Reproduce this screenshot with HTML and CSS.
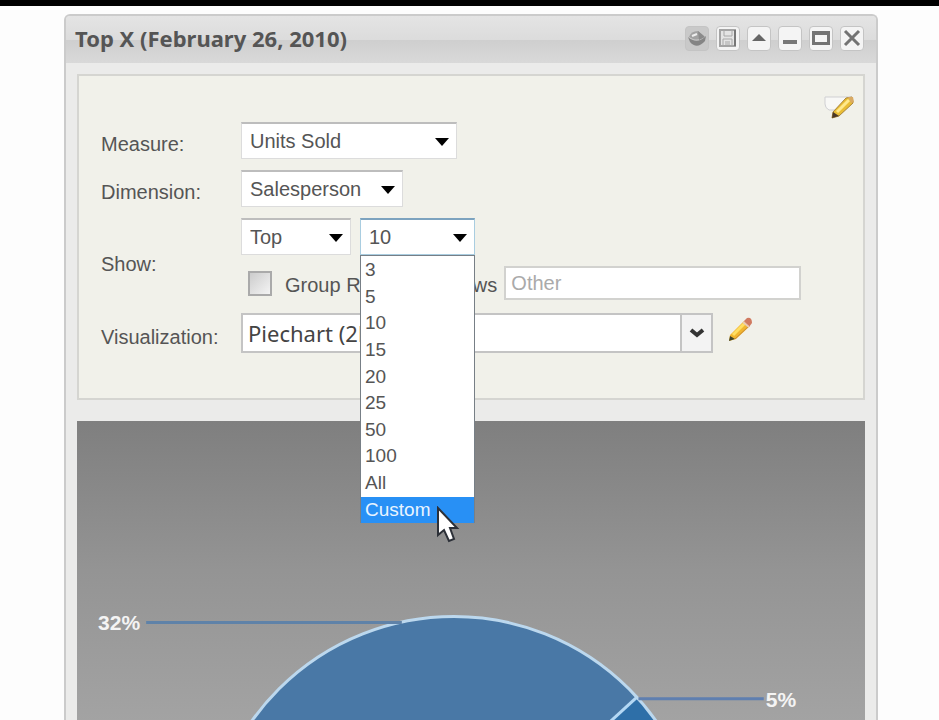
FILE: index.html
```html
<!DOCTYPE html>
<html lang="en">
<head>
    <meta charset="UTF-8">
    <meta name="viewport" content="width=device-width, initial-scale=1.0">
    <title>Top X</title>
    <link rel="stylesheet" href="styles.css">
</head>
<body>
    <main class="window">
        <header class="titlebar">
            <h1>Top X (February 26, 2010)</h1>
            <div class="tools">
                <button type="button" class="tool pressed" aria-label="Refresh">
                    <svg width="20" height="20" viewBox="0 0 20 20">
                        <path d="M2 9 Q4 3 11 3 L17 8 Q13 13 6 11 Z" fill="#a2a2a2"/>
                        <path d="M1 9 Q10 17 19 8 L18 13 Q10 22 3 14 Z" fill="#858585"/>
                        <path d="M11 3 L18 9 L12 12 Z" fill="#8b8b8b"/>
                        <path d="M5 8 L10 6" stroke="#eee" stroke-width="2"/>
                    </svg>
                </button>
                <button type="button" class="tool" aria-label="Save">
                    <svg width="20" height="20" viewBox="0 0 20 20">
                        <path d="M2 2 H17 V18 H2 Z" fill="#e4e4e4" stroke="#a4a4a4" stroke-width="2"/>
                        <path d="M6 2 V8 H14 V2 M5 18 V11 H14 V18 M7 14 H12 M7 16 H12" fill="none" stroke="#a8a8a8" stroke-width="1"/>
                        <path d="M17 2 V18" stroke="#777" stroke-width="2"/>
                    </svg>
                </button>
                <button type="button" class="tool" aria-label="Collapse">
                    <svg width="20" height="20" viewBox="0 0 20 20"><path d="M3 13 L10 6 L17 13 Z" fill="#666"/></svg>
                </button>
                <button type="button" class="tool" aria-label="Minimize">
                    <svg width="20" height="20" viewBox="0 0 20 20"><path d="M3 12 H17 V16 H3 Z" fill="#777"/></svg>
                </button>
                <button type="button" class="tool" aria-label="Maximize">
                    <svg width="20" height="20" viewBox="0 0 20 20"><path d="M1 3 H19 V17 H1 Z M4 7 V14 H16 V7 Z" fill="#737373" fill-rule="evenodd"/></svg>
                </button>
                <button type="button" class="tool" aria-label="Close">
                    <svg width="20" height="20" viewBox="0 0 20 20"><path d="M3 3 L17 17 M17 3 L3 17" stroke="#737373" stroke-width="3"/></svg>
                </button>
            </div>
        </header>

        <form class="settings">
            <button type="button" class="icon-button edit-note" aria-label="Edit settings">
                <svg width="32" height="26" viewBox="0 0 32 26">
                    <path d="M1 3 H28 L20 16 H5 Q1 14 1 10 Z" fill="#f8f8f6" stroke="#cfcfd2"/>
                    <path d="M9 18 L22 4 L28 3 L29 9 L15 22 L8 24 Z" fill="#e9bd35" stroke="#a8843a"/>
                    <path d="M13 18 L25 6" stroke="#ffe98c" stroke-width="3"/>
                    <path d="M24 3 L29 3 L30 8 L27 9 Z" fill="#d9aa63"/>
                    <path d="M9 18 L15 22 L8 24 Z" fill="#4b3828"/>
                </svg>
            </button>

            <label for="measure">Measure:</label>
            <div class="select-box measure">
                <select id="measure"><option>Units Sold</option></select>
                <svg class="arrow" width="14" height="8" viewBox="0 0 14 8"><path d="M0 0 H14 L7 8 Z"/></svg>
            </div>

            <label for="dimension">Dimension:</label>
            <div class="select-box dimension">
                <select id="dimension"><option>Salesperson</option></select>
                <svg class="arrow" width="14" height="8" viewBox="0 0 14 8"><path d="M0 0 H14 L7 8 Z"/></svg>
            </div>

            <label for="show">Show:</label>
            <div class="show">
                <div class="show-row">
                    <div class="select-box order">
                        <select id="show"><option>Top</option></select>
                        <svg class="arrow" width="14" height="8" viewBox="0 0 14 8"><path d="M0 0 H14 L7 8 Z"/></svg>
                    </div>
                    <div class="select-box count open">
                        <select id="count" aria-label="Count"><option>10</option></select>
                        <svg class="arrow" width="14" height="8" viewBox="0 0 14 8"><path d="M0 0 H14 L7 8 Z"/></svg>
                        <ul class="options" role="listbox" aria-label="Count">
                            <li role="option">3</li>
                            <li role="option">5</li>
                            <li role="option">10</li>
                            <li role="option">15</li>
                            <li role="option">20</li>
                            <li role="option">25</li>
                            <li role="option">50</li>
                            <li role="option">100</li>
                            <li role="option">All</li>
                            <li role="option" class="active" aria-selected="true">Custom</li>
                        </ul>
                        <svg class="cursor" width="24" height="38" viewBox="0 0 24 38">
                            <path d="M2 2 V29 L8 24 L13 35 L18 33 L14 22 H21 Z" fill="#fff" stroke="#2c3038" stroke-width="2"/>
                        </svg>
                    </div>
                </div>
                <div class="group-row">
                    <input type="checkbox" id="group">
                    <label for="group">Group Remaining Rows</label>
                    <input type="text" class="other" aria-label="Group name" placeholder="Other">
                </div>
            </div>

            <label for="visualization">Visualization:</label>
            <div class="visual-row">
                <div class="combo">
                    <input type="text" id="visualization" value="Piechart (2D)">
                    <button type="button" aria-label="Show visualizations">
                        <svg width="16" height="10" viewBox="0 0 16 10"><path d="M2 2 L8 7 L14 2" fill="none" stroke="#333" stroke-width="4"/></svg>
                    </button>
                </div>
                <button type="button" class="icon-button" aria-label="Edit visualization">
                    <svg width="26" height="32" viewBox="0 0 26 32">
                        <path d="M2 18 L16 4 L22 9 L8 22 L1 24 Z" fill="#f1b62f"/>
                        <path d="M5 18 L17 6" stroke="#ffdf62" stroke-width="3"/>
                        <path d="M7 22 L21 9" stroke="#c98a35" stroke-width="1"/>
                        <path d="M16 4 L19 1 Q24 0 24 6 L21 10 Z" fill="#d07a60"/>
                        <path d="M15 5 L21 10" stroke="#e8c9b5" stroke-width="2"/>
                        <path d="M2 19 L7 22 L1 24 Z" fill="#40452c"/>
                    </svg>
                </button>
            </div>
        </form>

        <section class="chart">
            <svg viewBox="0 0 786 299" preserveAspectRatio="xMidYMin slice" role="img" aria-label="Pie chart">
                <circle cx="376" cy="442" r="247" fill="#4978a6"/>
                <path d="M376 442 L558 276 A247 247 0 0 1 623 442 Z" fill="#2e6fa8"/>
                <path d="M376 442 L558 276" stroke="#b4d8f4" stroke-width="3"/>
                <circle cx="376" cy="442" r="247" fill="none" stroke="#bcd8ee" stroke-width="3"/>
                <path d="M69 201 H324" stroke="#5f82a8" stroke-width="3"/>
                <path d="M560 277 H685" stroke="#5f7fb0" stroke-width="3"/>
                <text x="21" y="208">32%</text>
                <text x="687" y="285">5%</text>
            </svg>
        </section>
    </main>
</body>
</html>
```

FILE: styles.css
```css
* {
    box-sizing: border-box;
}

body {
    margin: 0;
    min-height: 100vh;
    display: flex;
    flex-direction: column;
    padding: 8px 61px 0 64px;
    border-top: 6px solid #000;
    background: #fdfdfd;
    font-family: "Liberation Sans", Arial, sans-serif;
    font-size: 20px;
    color: #555;
}

button, input, select {
    font: inherit;
    color: inherit;
}

.window {
    flex: 1;
    display: flex;
    flex-direction: column;
    border: 2px solid #cbcbcb;
    border-bottom: 0;
    border-radius: 6px 6px 0 0;
    background: #ebebea;
}

.titlebar {
    display: flex;
    justify-content: space-between;
    align-items: center;
    height: 47px;
    padding: 0 12px 3px 9px;
    border-radius: 4px 4px 0 0;
    background: linear-gradient(#e4e4e4, #dcdcdc 50%, #cfcfcf 52%, #d9d9d9);
}

.titlebar h1 {
    margin: 0;
    font-family: "Noto Sans", "Open Sans", sans-serif;
    font-size: 22px;
    line-height: 28px;
    color: #555;
}

.tools {
    display: flex;
    gap: 7px;
}

.tool {
    display: grid;
    place-items: center;
    width: 24px;
    height: 25px;
    padding: 0;
    border: 1px solid #c4c4c4;
    border-radius: 4px;
    background: #f4f4f4;
}

.tool.pressed {
    background: #c9c9c9;
}

.settings {
    position: relative;
    display: grid;
    grid-template-columns: 140px 1fr;
    row-gap: 11px;
    align-items: center;
    margin: 11px 11px 21px;
    padding: 46px 22px 45px;
    border: 2px solid #d5d5d1;
    background: #f1f1ea;
}

.settings > label {
    padding-top: 8px;
}

.icon-button {
    display: grid;
    padding: 0;
    border: 0;
    background: none;
}

.edit-note {
    position: absolute;
    top: 18px;
    right: 7px;
}

.select-box {
    position: relative;
}

.select-box select {
    display: block;
    appearance: none;
    width: 100%;
    height: 37px;
    padding: 0 8px;
    border: 1px solid #dcdcdc;
    border-top: 2px solid #bdbdbd;
    border-radius: 0;
    background: #fff;
}

.arrow {
    position: absolute;
    top: 16px;
    right: 8px;
    pointer-events: none;
}

.measure {
    width: 216px;
}

.dimension {
    width: 162px;
}

.order {
    width: 110px;
}

.count {
    width: 115px;
}

.open select {
    border-color: #7da3bf #a9cde0 #a9cde0;
}

.options {
    position: absolute;
    z-index: 1;
    top: 37px;
    left: 0;
    display: grid;
    grid-auto-rows: 1fr;
    align-items: center;
    width: 100%;
    height: 268px;
    margin: 0;
    padding: 1px 0 0;
    border: 1px solid #777f86;
    border-bottom: 0;
    background: #fff;
    font-size: 19px;
    line-height: 26px;
    list-style: none;
}

.options li {
    padding-left: 4px;
}

.options .active {
    background: #2890f5;
    color: #e8f4ff;
}

.cursor {
    position: absolute;
    z-index: 2;
    top: 288px;
    left: 76px;
}

.show {
    display: grid;
    gap: 11px;
    padding-bottom: 2px;
}

.show-row {
    display: flex;
    gap: 9px;
}

.group-row {
    display: flex;
    align-items: center;
    height: 34px;
    padding-left: 7px;
}

.group-row label {
    padding-top: 4px;
}

.group-row input[type="checkbox"] {
    appearance: none;
    width: 24px;
    height: 25px;
    margin: 0 13px 0 0;
    border: 2px solid #aaa;
    background: linear-gradient(135deg, #ccc, #f4f4f4);
}

.other {
    width: 297px;
    height: 34px;
    margin-left: 7px;
    padding: 0 5px;
    border: 2px solid #d2d2cf;
    background: #fff;
}

.other::placeholder {
    color: #aaa;
}

.visual-row {
    display: flex;
    align-items: center;
    gap: 15px;
}

.combo {
    display: flex;
    width: 472px;
    height: 40px;
    border: 2px solid #c4c4c4;
    background: #fff;
}

.combo input {
    flex: 1;
    min-width: 0;
    padding: 0 5px;
    border: 0;
    background: none;
    font-family: "Noto Sans", "Open Sans", sans-serif;
    font-size: 22px;
    color: #444;
}

.combo button {
    display: grid;
    place-items: center;
    width: 31px;
    padding: 0;
    border: 0;
    border-left: 2px solid #c4c4c4;
    background: #f3f3f3;
}

.chart {
    flex: 1;
    display: flex;
    min-height: 299px;
    margin: 0 11px;
    background: linear-gradient(#7f7f7f, #949494 50%, #a3a3a3);
}

.chart svg {
    flex: 1;
    width: 100%;
    min-width: 0;
}

.chart text {
    font-size: 21px;
    font-weight: bold;
    fill: #f4f4f4;
}
```
